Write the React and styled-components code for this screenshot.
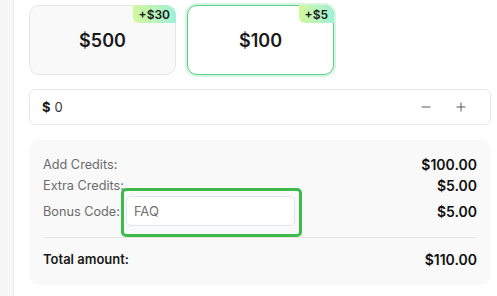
import React from "react";
import styled, { createGlobalStyle } from "styled-components";
import { Minus, Plus } from "lucide-react";

const GlobalStyle = createGlobalStyle`
  html, body {
    margin: 0;
    padding: 0;
    background: #ffffff;
    font-family: Inter, "Liberation Sans", sans-serif;
    color: #1a1a1a;
  }
`;

function App() {
  return (
    <>
      <GlobalStyle />
      <Page>
        <Sidebar />
        <Main>
          <Cards>
            <Card>
              <Amount>$500</Amount>
              <Badge>+$30</Badge>
            </Card>
            <Card $active>
              <Amount>$100</Amount>
              <Badge>+$5</Badge>
            </Card>
          </Cards>

          <CustomInput>
            <Dollar>$</Dollar>
            <Value>0</Value>
            <Steppers>
              <StepButton>
                <Minus size={14} strokeWidth={1.4} />
              </StepButton>
              <StepButton>
                <Plus size={14} strokeWidth={1.4} />
              </StepButton>
            </Steppers>
          </CustomInput>

          <Summary>
            <Row $h={22}>
              <Label>Add Credits:</Label>
              <Price>$100.00</Price>
            </Row>
            <Row $h={21}>
              <Label>Extra Credits:</Label>
              <Price>$5.00</Price>
            </Row>
            <Row $h={30}>
              <Label>Bonus Code:</Label>
              <CodeWrap>
                <CodeInput defaultValue="FAQ" />
                <Highlight />
              </CodeWrap>
              <Price>$5.00</Price>
            </Row>
            <Divider />
            <Row $h={22}>
              <TotalLabel>Total amount:</TotalLabel>
              <Price>$110.00</Price>
            </Row>
          </Summary>
        </Main>
      </Page>
    </>
  );
}

export default App;

const Page = styled.div`
  display: flex;
  width: 497px;
  height: 296px;
  overflow: hidden;
`;

const Sidebar = styled.div`
  width: 13px;
  flex-shrink: 0;
  background: #f7f7f7;
  border-right: 1px solid #ececec;
`;

const Main = styled.div`
  flex: 1;
  padding: 5px 6px 0 15px;
  display: flex;
  flex-direction: column;
`;

const Cards = styled.div`
  display: flex;
  gap: 11px;
`;

const Card = styled.div`
  position: relative;
  width: 147px;
  height: 70px;
  box-sizing: border-box;
  border-radius: 10px;
  background: ${(p) => (p.$active ? "#ffffff" : "#f9f9f9")};
  border: 1px solid ${(p) => (p.$active ? "#5ccf8c" : "#e6e6e6")};
  box-shadow: ${(p) => (p.$active ? "0 0 0 2px #d6f5e2" : "none")};
  display: flex;
  align-items: center;
  justify-content: center;
`;

const Amount = styled.span`
  font-size: 18px;
  font-weight: 600;
  color: #1a1a1a;
`;

const Badge = styled.span`
  position: absolute;
  top: -1px;
  right: -1px;
  height: 18px;
  padding: 0 6px;
  display: flex;
  align-items: center;
  font-size: 12px;
  font-weight: 600;
  color: #1a1a1a;
  background: linear-gradient(90deg, #d3f89e, #9ef0d9);
  border-radius: 0 10px 0 6px;
`;

const CustomInput = styled.div`
  margin-top: 14px;
  height: 36px;
  box-sizing: border-box;
  border: 1px solid #e8e8e8;
  border-radius: 6px;
  display: flex;
  align-items: center;
  padding: 0 15px 0 12px;
`;

const Dollar = styled.span`
  font-size: 13px;
  font-weight: 700;
  margin-right: 4px;
`;

const Value = styled.span`
  font-size: 13px;
  color: #333;
  flex: 1;
`;

const Steppers = styled.div`
  display: flex;
  gap: 7px;
`;

const StepButton = styled.button`
  width: 28px;
  height: 24px;
  padding: 0;
  border: none;
  background: transparent;
  color: #333;
  display: flex;
  align-items: center;
  justify-content: center;
`;

const Summary = styled.div`
  margin-top: 15px;
  height: 145px;
  box-sizing: border-box;
  background: #f9f9f9;
  border-radius: 10px;
  padding: 13px 14px 0 14px;
  display: flex;
  flex-direction: column;
`;

const Row = styled.div`
  height: ${(p) => p.$h}px;
  display: flex;
  align-items: center;
`;

const Label = styled.span`
  font-size: 12.7px;
  color: #6b6b6b;
`;

const TotalLabel = styled.span`
  font-size: 13px;
  font-weight: 600;
  color: #1a1a1a;
`;

const Price = styled.span`
  margin-left: auto;
  font-size: 14px;
  font-weight: 600;
  color: #111;
`;

const CodeWrap = styled.div`
  position: relative;
  margin-left: 6px;
`;

const CodeInput = styled.input`
  width: 169px;
  height: 30px;
  box-sizing: border-box;
  border: 1px solid #e0e4ec;
  border-radius: 5px;
  background: #ffffff;
  padding: 0 7px;
  font-family: Inter, "Liberation Sans", sans-serif;
  font-size: 13px;
  color: #707070;
  outline: none;
`;

const Highlight = styled.div`
  position: absolute;
  left: -5px;
  top: -8px;
  right: -7px;
  bottom: -11px;
  border: 3px solid #3cba4a;
  border-radius: 5px;
  pointer-events: none;
`;

const Divider = styled.div`
  margin-top: 11px;
  height: 1px;
  background: #e6e6e6;
  margin-bottom: 10px;
`;
